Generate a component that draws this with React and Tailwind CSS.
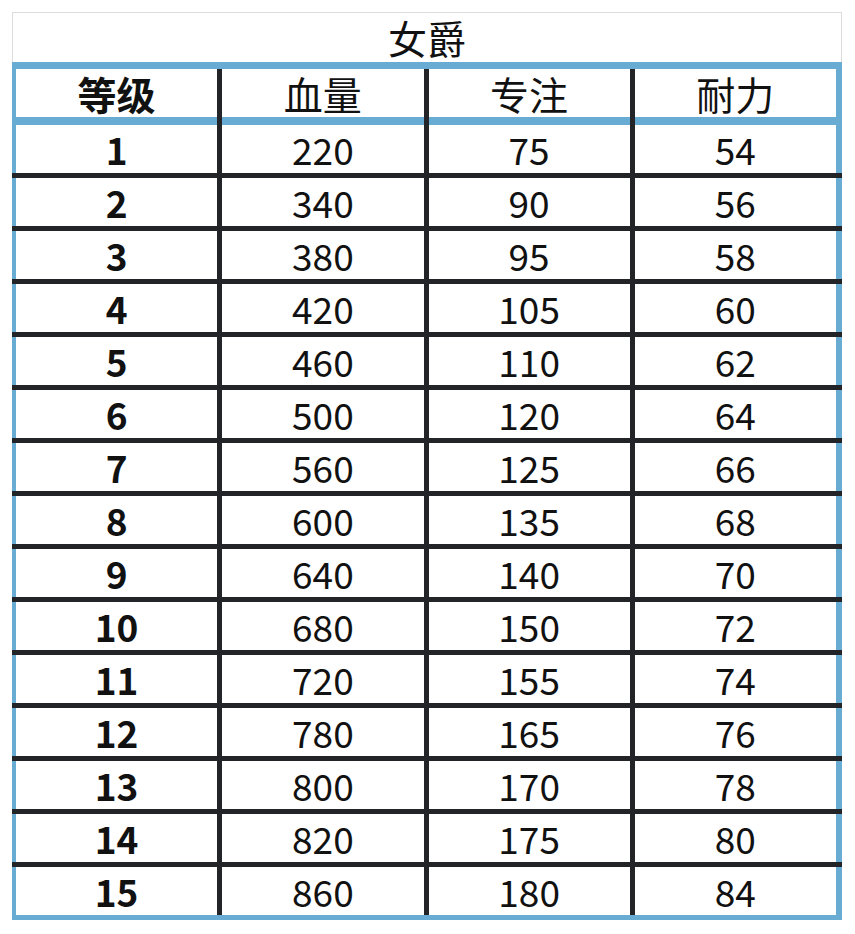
const ROWS = [
  [1, 220, 75, 54],
  [2, 340, 90, 56],
  [3, 380, 95, 58],
  [4, 420, 105, 60],
  [5, 460, 110, 62],
  [6, 500, 120, 64],
  [7, 560, 125, 66],
  [8, 600, 135, 68],
  [9, 640, 140, 70],
  [10, 680, 150, 72],
  [11, 720, 155, 74],
  [12, 780, 165, 76],
  [13, 800, 170, 78],
  [14, 820, 175, 80],
  [15, 860, 180, 84],
];

const HEADERS = ["等级", "血量", "专注", "耐力"];

export default function App() {
  return (
    <div
      className="w-[855px] h-[934px] bg-white pt-[12px] pl-[12px] text-[#111]"
      style={{ fontFamily: '"Noto Sans CJK SC", "Noto Sans", sans-serif' }}
    >
      <div className="w-[830px]">
        {/* Title */}
        <div className="h-[50px] border border-b-0 border-[#dcdcdc] flex items-center justify-center text-[39px] leading-none">
          女爵
        </div>

        <div className="h-[7px] bg-[#68acd4]" />

        {/* Header */}
        <div className="grid grid-cols-4 gap-x-[5px] bg-[#222428] border-l-[4px] border-r-[6px] border-[#68acd4]">
          {HEADERS.map((h, i) => (
            <div
              key={h}
              className={`h-[48px] bg-white flex items-center justify-center text-[39px] leading-none ${
                i === 0 ? "font-bold" : ""
              }`}
            >
              {h}
            </div>
          ))}
        </div>

        <div className="grid grid-cols-4 gap-x-[5px] bg-[#222428] border-l-[4px] border-r-[6px] border-[#68acd4]">
          {HEADERS.map((h) => (
            <div key={h} className="h-[8px] bg-[#68acd4]" />
          ))}
        </div>

        {/* Rows */}
        {ROWS.map((row, r) => (
          <div key={row[0]}>
            {r > 0 && <div className="h-[5px] bg-[#222428]" />}
            <div className="grid grid-cols-4 gap-x-[5px] bg-[#222428] border-l-[4px] border-r-[6px] border-[#68acd4]">
              {row.map((v, i) => (
                <div
                  key={i}
                  className={`h-[48px] bg-white flex items-center justify-center text-[37px] leading-none ${
                    i === 0 ? "font-bold" : ""
                  }`}
                >
                  {v}
                </div>
              ))}
            </div>
          </div>
        ))}

        <div className="h-[5px] bg-[#68acd4]" />
      </div>
    </div>
  );
}
